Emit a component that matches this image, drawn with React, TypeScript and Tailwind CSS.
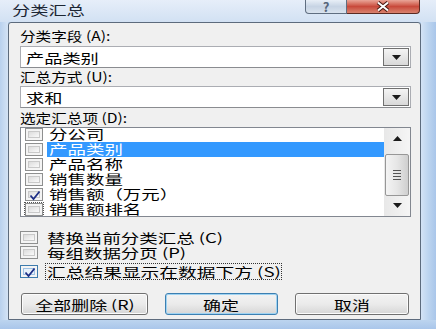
import React from 'react';

type TProps = { children: React.ReactNode; className?: string };

// stretched text, the screenshot is wider than it is tall
const T: React.FC<TProps> = ({ children, className = '' }) => (
  <span className={`inline-block whitespace-nowrap ${className}`}>{children}</span>
);

const Check: React.FC = () => (
  <svg width="18" height="13" viewBox="0 0 18 13" className="absolute inset-0">
    <path d="M4.5 6.5 L7.5 10 L13.5 2.5" fill="none" stroke="#1f2f86" strokeWidth="1.8" />
  </svg>
);

const Box: React.FC<{ checked?: boolean; blue?: boolean }> = ({ checked, blue }) => (
  <div
    className={`relative w-[18px] h-[13px] border ${blue ? 'border-[#3d7bad]' : 'border-[#8e8f8f]'} bg-[#f4f4f4] p-[2px]`}
  >
    <div className={`w-full h-full border ${blue ? 'border-[#9fc2e4] bg-[#e7f1fb]' : 'border-[#c9c9c9] bg-gradient-to-br from-[#dcdcdc] to-[#fafafa]'}`} />
    {checked && <Check />}
  </div>
);

const Arrow: React.FC<{ up?: boolean }> = ({ up }) => (
  <svg width="9" height="5" viewBox="0 0 9 5">
    <path d={up ? 'M0 5 L4.5 0 L9 5 Z' : 'M0 0 L9 0 L4.5 5 Z'} fill="#1a1a1a" />
  </svg>
);

const Combo: React.FC<{ value: string }> = ({ value }) => (
  <div className="h-[22px] w-[391px] bg-white border border-[#abadb3] border-b-[#8a8c90] flex items-center pl-[5px] pr-[1px]">
    <div className="flex-1 text-[13px] leading-[15px]">
      <T className="origin-left scale-x-[1.4]">{value}</T>
    </div>
    <div className="w-[26px] h-[18px] border border-[#707070] bg-gradient-to-b from-[#f4f4f4] to-[#d9d9d9] flex items-center justify-center">
      <Arrow />
    </div>
  </div>
);

const items = [
  { label: '分公司' },
  { label: '产品类别', selected: true },
  { label: '产品名称' },
  { label: '销售数量' },
  { label: '销售额（万元）', checked: true },
  { label: '销售额排名', focus: true },
];

const Btn: React.FC<{ w: string; def?: boolean; children: React.ReactNode }> = ({ w, def, children }) => (
  <div
    className={`${w} h-[22px] rounded-[3px] border ${def ? 'border-[#3c7fb1] shadow-[inset_0_0_0_1px_#9fd3f2]' : 'border-[#707070] shadow-[inset_0_0_0_1px_#fbfbfb]'} bg-gradient-to-b from-[#f2f2f2] via-[#ebebeb] to-[#d6d6d6] flex items-center justify-center text-[13px] leading-[15px]`}
  >
    <T className="origin-center scale-x-[1.38]">{children}</T>
  </div>
);

export default function App() {
  return (
    <div className="w-[436px] h-[329px] bg-[#bcd4ef] flex flex-col overflow-hidden text-black font-['Noto_Sans_CJK_SC','Noto_Sans',sans-serif]">
      {/* title bar */}
      <div className="h-[22px] flex items-start bg-gradient-to-b from-[#e6eef9] to-[#d2e1f3]">
        <div className="pl-[12px] pt-[1px] text-[13px] leading-[17px] text-[#1b2533]">
          <T className="origin-left scale-x-[1.4]">分类汇总</T>
        </div>
        <div className="ml-auto mr-[16px] flex">
          <div className="w-[42px] h-[14px] border border-t-0 border-[#5f6e80] rounded-bl-[4px] bg-gradient-to-b from-[#e8eff7] via-[#c7d4e4] to-[#d9e3ee] flex items-center justify-center">
            <span className="text-[13px] leading-[13px] font-bold text-[#56657a]">?</span>
          </div>
          <div className="w-[73px] h-[14px] border border-t-0 border-l-0 border-[#5a2a22] rounded-br-[4px] bg-gradient-to-b from-[#e9a598] via-[#c8493b] to-[#d9826f] flex items-center justify-center">
            <svg width="16" height="11" viewBox="0 0 16 11">
              <path d="M3 1.5 L13 9.5 M13 1.5 L3 9.5" stroke="#4a1b14" strokeWidth="4" />
              <path d="M3 1.5 L13 9.5 M13 1.5 L3 9.5" stroke="#ffffff" strokeWidth="2" />
            </svg>
          </div>
        </div>
      </div>

      <div className="flex">
        <div className="w-[8px] bg-gradient-to-r from-[#b9d1ee] to-[#d4e3f5]" />
        <div className="w-[413px] h-[298px] border border-[#5d6b7d] rounded-t-[3px] bg-[#f0f0f0] pl-[11px] pr-[9px] pt-[4px] flex flex-col">
          <div className="h-[18px] text-[13px] leading-[18px]">
            <T className="origin-left scale-x-[1.2]">分类字段 (A):</T>
          </div>
          <div className="mt-[1px]">
            <Combo value="产品类别" />
          </div>
          <div className="h-[18px] text-[13px] leading-[18px]">
            <T className="origin-left scale-x-[1.2]">汇总方式 (U):</T>
          </div>
          <Combo value="求和" />
          <div className="mt-[1px] h-[18px] text-[13px] leading-[18px]">
            <T className="origin-left scale-x-[1.2]">选定汇总项 (D):</T>
          </div>

          {/* list */}
          <div className="h-[90px] w-[391px] bg-white border border-[#828790] flex overflow-hidden">
            <div className="flex-1 flex flex-col overflow-hidden">
              <div className="-mt-[1px] flex flex-col">
                {items.map((it) => (
                  <div key={it.label} className="h-[15px] shrink-0 flex items-center pl-[4px]">
                    <div className={it.focus ? 'outline outline-1 outline-dotted outline-[#555]' : ''}>
                      <Box checked={it.checked} />
                    </div>
                    <div
                      className={`ml-[4px] flex-1 h-[15px] pl-[2px] text-[13px] leading-[14px] ${it.selected ? 'bg-[#3399ff] text-white' : ''}`}
                    >
                      <T className="origin-left scale-x-[1.42]">{it.label}</T>
                    </div>
                  </div>
                ))}
              </div>
            </div>
            <div className="w-[26px] bg-gradient-to-r from-[#e8e8e8] to-[#f5f5f5] flex flex-col items-center">
              <div className="h-[20px] flex items-center">
                <Arrow up />
              </div>
              <div className="mt-[6px] w-[24px] h-[42px] rounded-[2px] border border-[#979797] bg-gradient-to-r from-[#f4f4f4] via-[#e6e6e6] to-[#cfcfcf] flex flex-col items-center justify-center gap-[2px]">
                <div className="w-[8px] h-[1px] bg-[#555]" />
                <div className="w-[8px] h-[1px] bg-[#555]" />
                <div className="w-[8px] h-[1px] bg-[#555]" />
                <div className="w-[8px] h-[1px] bg-[#555]" />
              </div>
              <div className="mt-[7px] flex items-center">
                <Arrow />
              </div>
            </div>
          </div>

          {/* options */}
          <div className="mt-[13px] h-[15px] flex items-center">
            <Box />
            <div className="ml-[9px] text-[13px] leading-[15px]">
              <T className="origin-left scale-x-[1.42]">替换当前分类汇总 (C)</T>
            </div>
          </div>
          <div className="h-[15px] flex items-center">
            <Box />
            <div className="ml-[9px] text-[13px] leading-[15px]">
              <T className="origin-left scale-x-[1.42]">每组数据分页 (P)</T>
            </div>
          </div>
          <div className="mt-[3px] h-[17px] flex items-center">
            <Box checked blue />
            <div className="ml-[7px] w-[237px] h-[17px] border border-dotted border-[#333] pl-[1px] text-[13px] leading-[15px]">
              <T className="origin-left scale-x-[1.44]">汇总结果显示在数据下方 (S)</T>
            </div>
          </div>

          {/* buttons */}
          <div className="mt-[13px] flex">
            <div className="ml-[1px]">
              <Btn w="w-[127px]">全部删除 (R)</Btn>
            </div>
            <div className="ml-[17px]">
              <Btn w="w-[113px]" def>确定</Btn>
            </div>
            <div className="ml-[17px]">
              <Btn w="w-[114px]">取消</Btn>
            </div>
          </div>
        </div>
        <div className="w-[15px] bg-gradient-to-r from-[#d4e3f5] via-[#bcd4ef] to-[#a9c6ea]" />
      </div>
      <div className="flex-1 bg-gradient-to-b from-[#bcd4ef] to-[#a9c6ea]" />
    </div>
  );
}
